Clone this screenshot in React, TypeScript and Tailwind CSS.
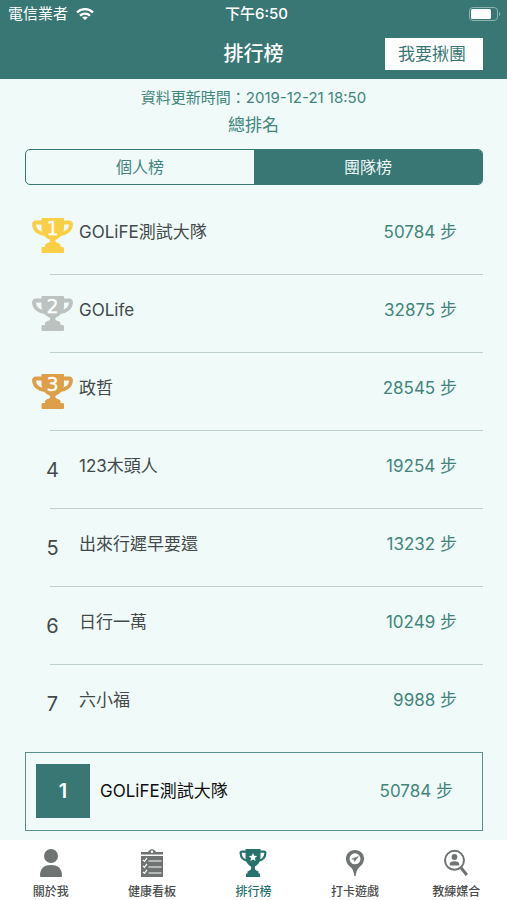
import { useState } from "react";
import clsx from "clsx";

type Team = {
  rank: number;
  name: string;
  steps: number;
};

const teams: Team[] = [
  { rank: 1, name: "GOLiFE測試大隊", steps: 50784 },
  { rank: 2, name: "GOLife", steps: 32875 },
  { rank: 3, name: "政哲", steps: 28545 },
  { rank: 4, name: "123木頭人", steps: 19254 },
  { rank: 5, name: "出來行遲早要還", steps: 13232 },
  { rank: 6, name: "日行一萬", steps: 10249 },
  { rank: 7, name: "六小福", steps: 9988 },
];

// Gold, silver, bronze
const trophyColors = ["text-[#f9cf45]", "text-[#bcc2c0]", "text-[#dd9f48]"];

const WifiIcon = () => (
  <svg className="w-[18px] h-3" viewBox="0 0 18 12" fill="none" stroke="currentColor" strokeWidth="2.4">
    <path d="M1 4.3C5.5 0.1 12.5 0.1 17 4.3" />
    <path d="M4 7.6C6.8 5 11.2 5 14 7.6" />
    <path d="M9 12L6.2 9.4C7.8 8.1 10.2 8.1 11.8 9.4Z" fill="currentColor" stroke="none" />
  </svg>
);

const BatteryIcon = () => (
  <svg className="w-8 h-[14px]" viewBox="0 0 32 14">
    <rect x="0.5" y="0.5" width="28" height="13" rx="3.5" fill="none" stroke="#8db3b0" />
    <rect x="2" y="2" width="20" height="10" rx="1.5" fill="#fff" />
    <path d="M30 4.8C31.6 5.5 31.6 8.5 30 9.2Z" fill="#8db3b0" />
  </svg>
);

const Trophy = ({ rank }: { rank: number }) => (
  <svg
    className={clsx("w-[41px] h-[35px]", trophyColors[rank - 1])}
    viewBox="0 0 41 35"
    role="img"
    aria-label={`第${rank}名`}
  >
    <path
      d="M11 4.5H4.2C2.6 4.5 1.8 5.3 2 7C2.6 12.2 7 15.6 13 16.2M30.5 4.5H37C38.6 4.5 39.2 5.3 39 7C38.4 12.2 34 15.6 28 16.2"
      fill="none"
      stroke="currentColor"
      strokeWidth="3.8"
    />
    <path
      d="M10.5 0H31C31.8 0 32 0.4 32 1V10C32 15.5 28.5 19.5 24 21.5C23 22.5 23.2 24 24.5 24.6L27 25.5C28 26 28.5 26.5 28.5 27.5V29H30.5C31.5 29 32 29.6 32 30.5V33.5C32 34.5 31.5 35 30.500 35H11C10 35 9.5 34.5 9.5 33.5V30.5C9.5 29.6 10 29 11 29H13V27.5C13 26.5 13.5 26 14.5 25.5L17 24.6C18.3 24 18.5 22.5 17.500 21.5C13 19.5 9.5 15.5 9.5 10V1C9.5 0.4 9.7 0 10.5 0Z"
      fill="currentColor"
    />
    <text
      x="20.5"
      y="17"
      textAnchor="middle"
      fontSize="19"
      fill="#fff"
      stroke="#fff"
      strokeWidth="0.3"
      fontFamily="DejaVu Sans, sans-serif"
    >
      {rank}
    </text>
  </svg>
);

const UserIcon = () => (
  <svg className="w-7 h-[30px]" viewBox="0 0 28 30" fill="currentColor">
    <circle cx="14" cy="8" r="7" />
    <path d="M3 27.5C3 20 7.5 17 14 17C20.5 17 25 20 25 27.5C25 28.5 24.5 29 23.5 29H4.5C3.5 29 3 28.5 3 27.5Z" />
  </svg>
);

const ClipboardIcon = () => (
  <svg className="w-7 h-[30px]" viewBox="0 0 28 30" fill="currentColor">
    <path d="M3 4H9.5C10.5 4 11 1.2 14 1.2C17 1.2 17.5 4 18.5 4H25V6.5H3Z" />
    <path d="M3 8H25V29H3Z" />
    <circle cx="14" cy="3.8" r="1.2" fill="#fff" />
    <path
      d="M5 11.8L6.5 13.3L9 9.8M5 17.8L6.5 19.3L9 15.8M5 23.8L6.5 25.3L9 21.8M10.5 13H23.5M10.5 19H23.5M10.5 25H23.5"
      fill="none"
      stroke="#fff"
      strokeWidth="1.2"
    />
  </svg>
);

const RankingIcon = () => (
  <svg className="w-7 h-[30px]" viewBox="0 0 28 30" fill="currentColor">
    <path
      d="M7 3.6H3C2 3.6 1.6 4 1.6 5C1.8 9.5 5 12.4 9.5 13M21 3.6H25C26 3.6 26.4 4 26.4 5C26.2 9.5 23 12.4 18.5 13"
      fill="none"
      stroke="currentColor"
      strokeWidth="2.2"
    />
    <path d="M6.5 1H21.5V8.5C21.5 13.5 19.5 16.5 16 18.5C15.600 20.5 16 22 17.5 22.5L19.5 23.5V25.5H21V29H7V25.5H8.5V23.5L10.5 22.5C12 22 12.4 20.5 12 18.5C8.5 16.5 6.5 13.5 6.5 8.5Z" />
    <path
      d="M14 5L15.2 7.8L18.2 8L15.900 10L16.600 13L14 11.400L11.400 13L12.100 10L9.800 8L12.800 7.8Z"
      fill="#fff"
    />
  </svg>
);

const CheckinIcon = () => (
  <svg className="w-7 h-[30px]" viewBox="0 0 28 30" fill="currentColor">
    <path
      fillRule="evenodd"
      d="M14 2C19.2 2 23 5.8 23 10.8C23 15 20.5 17.5 18 19.5C16 21.2 15.3 24 14.6 28H13.4C12.7 24 12 21.2 10 19.5C7.5 17.5 5 15 5 10.8C5 5.8 8.8 2 14 2ZM14 5.3A5.5 5.5 0 1 0 14 16.3A5.5 5.5 0 1 0 14 5.3Z"
    />
    <path d="M10.8 11L13 11.2L13.6 13.4L17.4 8.4Z" stroke="currentColor" strokeWidth="0.5" />
  </svg>
);

const CoachIcon = () => (
  <svg className="w-7 h-[30px]" viewBox="0 0 28 30" fill="currentColor">
    <circle cx="12.5" cy="12.3" r="9.5" fill="none" stroke="currentColor" strokeWidth="2" />
    <path d="M18.8 19.5L24.8 27" stroke="currentColor" strokeWidth="3" />
    <circle cx="12.5" cy="9" r="2.9" />
    <path d="M7.8 17.5V15.8C7.8 14 9.5 13.2 12.5 13.2C15.5 13.2 17.2 14 17.2 15.8V17.5Z" />
  </svg>
);

const navItems = [
  { label: "關於我", icon: UserIcon },
  { label: "健康看板", icon: ClipboardIcon },
  { label: "排行榜", icon: RankingIcon, active: true },
  { label: "打卡遊戲", icon: CheckinIcon },
  { label: "教練媒合", icon: CoachIcon },
];

const tabs = ["個人榜", "團隊榜"];

const TeamRow = ({ team }: { team: Team }) => (
  <li className="group">
    <div className="flex h-[77px] items-center pl-8 pr-[50px]">
      <div className="flex w-[41px] justify-center text-xl text-[#444a49]">
        {team.rank <= 3 ? <Trophy rank={team.rank} /> : team.rank}
      </div>
      <span className="ml-[6px] flex-1 pb-2 text-[#444a49]">{team.name}</span>
      <span className="pb-2 text-[#43857b]">{team.steps} 步</span>
    </div>
    <div className="ml-[50px] mr-6 h-px bg-[#bdd0ce] group-last:invisible" />
  </li>
);

export default function App() {
  const [activeTab, setActiveTab] = useState("團隊榜");
  const myTeam = teams[0];

  return (
    <div className="flex min-h-screen flex-col bg-[#effaf9] font-['Inter','Noto_Sans_CJK_TC',sans-serif] text-[17px] leading-6">
      {/* Header */}
      <header className="bg-[#397774] text-white">
        <div className="grid h-7 grid-cols-3 items-center pl-2 pr-[6px] text-[15px]">
          <div className="flex items-center gap-2">
            <span>電信業者</span>
            <WifiIcon />
          </div>
          <span className="pl-1 text-center font-medium">下午6:50</span>
          <div className="flex justify-end">
            <BatteryIcon />
          </div>
        </div>
        <div className="grid h-[51px] grid-cols-3 items-center pr-6">
          <h1 className="col-start-2 pl-6 text-center text-xl font-medium">排行榜</h1>
          <button className="h-8 w-[98px] justify-self-end bg-white pr-1 text-[#397774]">我要揪團</button>
        </div>
      </header>

      <main className="flex-1">
        <div className="pt-[7px] text-center text-[#43857b]">
          <p className="text-[15px]">資料更新時間：2019-12-21 18:50</p>
          <h2 className="pt-[3px]">總排名</h2>
        </div>

        {/* Tabs */}
        <div className="mr-6 ml-[25px] mt-3 flex h-9 overflow-hidden rounded-[5px] border border-[#397774] text-base">
          {tabs.map((tab) => (
            <button
              key={tab}
              onClick={() => setActiveTab(tab)}
              className={clsx(
                "flex-1",
                activeTab === tab ? "bg-[#397774] text-[#effaf9]" : "text-[#43857b]"
              )}
            >
              {tab}
            </button>
          ))}
        </div>

        {/* Ranking */}
        <ol className="mt-3">
          {teams.map((team) => (
            <TeamRow key={team.rank} team={team} />
          ))}
        </ol>

        {/* Own team */}
        <section className="mt-[9px] mr-6 mb-2 ml-[25px] flex h-[79px] items-center border border-[#5b918b] pb-[2px] pl-[10px] pr-[29px]">
          <span className="flex h-[54px] w-[54px] items-center justify-center bg-[#397774] text-xl font-semibold text-white">
            {myTeam.rank}
          </span>
          <span className="ml-[10px] flex-1 text-[#111]">{myTeam.name}</span>
          <span className="text-[#43857b]">{myTeam.steps} 步</span>
        </section>
      </main>

      {/* Bottom navigation */}
      <nav className="grid h-[60px] grid-cols-5 bg-white">
        {navItems.map(({ label, icon: Icon, active }) => (
          <a
            key={label}
            href="#"
            className={clsx(
              "flex flex-col items-center pt-2 text-xs font-medium",
              active ? "text-[#28726d]" : "text-[#6f7372]"
            )}
          >
            <Icon />
            <span className={clsx("pt-[6px]", !active && "text-[#4a4d4c]")}>{label}</span>
          </a>
        ))}
      </nav>
    </div>
  );
}
